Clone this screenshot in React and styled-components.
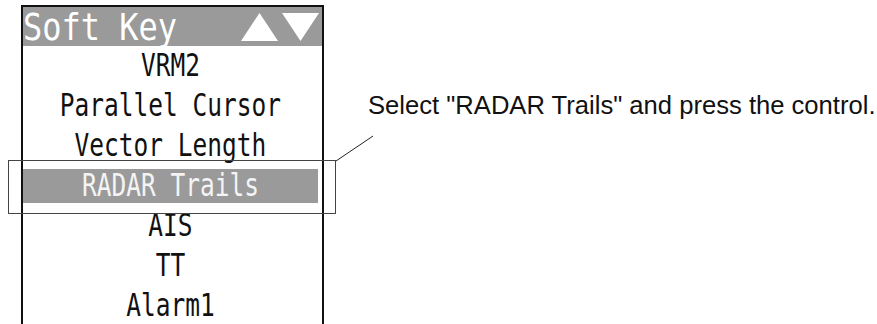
import styled, { createGlobalStyle } from 'styled-components'

const GlobalStyle = createGlobalStyle`
  html, body {
    margin: 0;
    padding: 0;
    background: #fff;
    overflow: hidden;
  }
`

const Page = styled.div`
  display: flex;
  align-items: flex-start;
  gap: 44px;
  padding: 5px 0 0 21px;
  height: 324px;
  box-sizing: border-box;
`

const Panel = styled.div`
  position: relative;
  flex: none;
  width: 303px;
  height: 340px;
  box-sizing: border-box;
  border: 2px solid #111;
  border-bottom: none;
  background: #fff;
`

const Header = styled.div`
  height: 39px;
  display: flex;
  align-items: center;
  justify-content: space-between;
  background: #9a9a9a;
  color: #fff;
`

const Title = styled.span`
  display: inline-block;
  font-family: 'DejaVu Sans Mono', monospace;
  font-size: 32px;
  line-height: 32px;
  transform: scaleY(1.18);
  margin-top: 1px;
`

const Arrows = styled.div`
  display: flex;
  gap: 4px;
  padding-right: 3px;
`

const List = styled.div`
  display: flex;
  flex-direction: column;
`

const Row = styled.div`
  height: 40px;
  display: flex;
  align-items: center;
  justify-content: center;
  box-sizing: border-box;
  padding: 0 4px 0 0;
  background: ${(p) => (p.$active ? '#9a9a9a' : 'transparent')};
  background-clip: content-box;
  border-top: ${(p) => (p.$active ? '3px solid #fff' : 'none')};
  border-bottom: ${(p) => (p.$active ? '3px solid #fff' : 'none')};
  color: ${(p) => (p.$active ? '#f4f4f4' : '#111')};
`

const Label = styled.span`
  display: inline-block;
  font-family: 'DejaVu Sans Mono', monospace;
  font-size: 24.5px;
  line-height: 1;
  transform: scaleY(1.28);
`

const CalloutFrame = styled.div`
  position: absolute;
  left: -15px;
  top: 153px;
  width: 328px;
  height: 54px;
  box-sizing: border-box;
  border: 1px solid #444;
  pointer-events: none;
`

const Leader = styled.svg`
  position: absolute;
  left: 312px;
  top: 129px;
  overflow: visible;
`

const Note = styled.p`
  margin: 88px 0 0;
  font-family: 'Liberation Sans', Arial, sans-serif;
  font-size: 25.6px;
  line-height: 1;
  color: #111;
  white-space: nowrap;
`

const items = [
  'VRM2',
  'Parallel Cursor',
  'Vector Length',
  'RADAR Trails',
  'AIS',
  'TT',
  'Alarm1',
]

const Triangle = ({ down }) => (
  <svg width="37" height="28" viewBox="0 0 37 28">
    <polygon
      points={down ? '0,0 37,0 18.5,28' : '18.5,0 37,28 0,28'}
      fill="#fff"
    />
  </svg>
)

const App = () => {
  return (
    <Page>
      <GlobalStyle />
      <Panel>
        <Header>
          <Title>Soft Key</Title>
          <Arrows>
            <Triangle />
            <Triangle down />
          </Arrows>
        </Header>
        <List>
          {items.map((item) => (
            <Row key={item} $active={item === 'RADAR Trails'}>
              <Label>{item}</Label>
            </Row>
          ))}
        </List>
        <CalloutFrame />
        <Leader width="38" height="26">
          <line x1="1" y1="25" x2="38" y2="0" stroke="#222" strokeWidth="1" />
        </Leader>
      </Panel>
      <Note>Select "RADAR Trails" and press the control.</Note>
    </Page>
  )
}

export default App
